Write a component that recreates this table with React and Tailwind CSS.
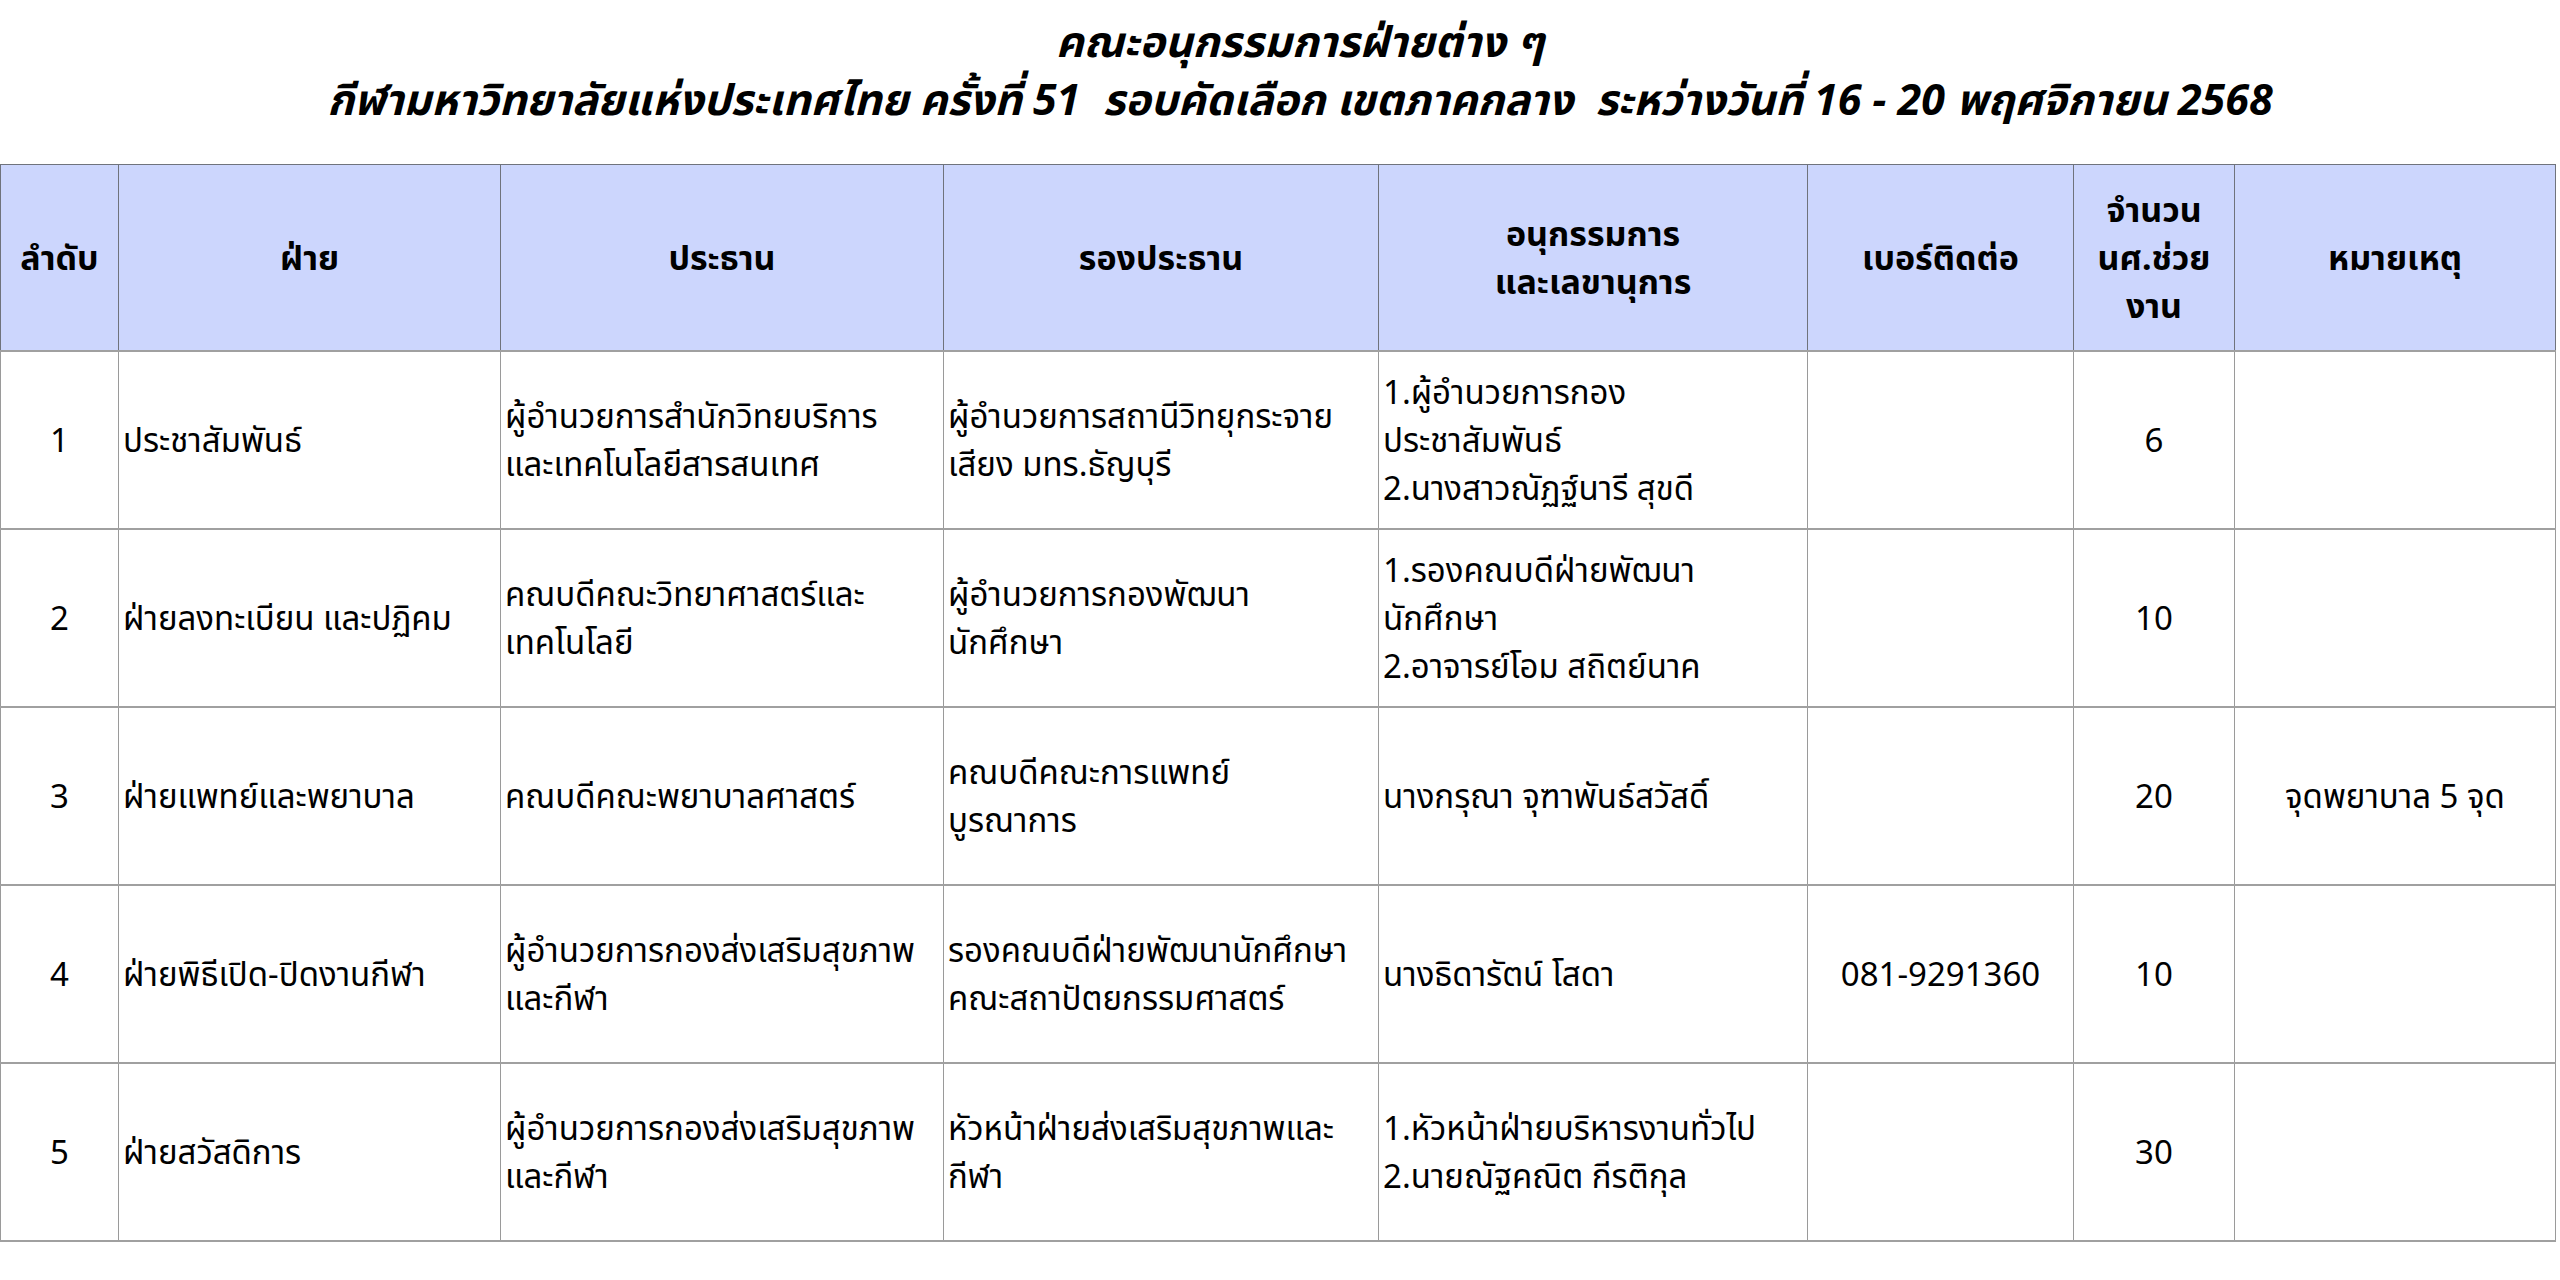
const columns = [
  { key: 'no', label: 'ลำดับ', width: 'w-[118px]' },
  { key: 'dept', label: 'ฝ่าย', width: 'w-[382px]' },
  { key: 'chair', label: 'ประธาน', width: 'w-[443px]' },
  { key: 'vice', label: 'รองประธาน', width: 'w-[435px]' },
  { key: 'members', label: ['อนุกรรมการ', 'และเลขานุการ'], width: 'w-[429px]' },
  { key: 'phone', label: 'เบอร์ติดต่อ', width: 'w-[266px]' },
  { key: 'students', label: ['จำนวน', 'นศ.ช่วย', 'งาน'], width: 'w-[161px]' },
  { key: 'note', label: 'หมายเหตุ', width: 'w-[321px]' },
]

const rows = [
  {
    no: '1',
    dept: ['ประชาสัมพันธ์'],
    chair: ['ผู้อำนวยการสำนักวิทยบริการ', 'และเทคโนโลยีสารสนเทศ'],
    vice: ['ผู้อำนวยการสถานีวิทยุกระจาย', 'เสียง มทร.ธัญบุรี'],
    members: ['1.ผู้อำนวยการกอง', 'ประชาสัมพันธ์', '2.นางสาวณัฏฐ์นารี สุขดี'],
    phone: '',
    students: '6',
    note: '',
  },
  {
    no: '2',
    dept: ['ฝ่ายลงทะเบียน และปฏิคม'],
    chair: ['คณบดีคณะวิทยาศาสตร์และ', 'เทคโนโลยี'],
    vice: ['ผู้อำนวยการกองพัฒนา', 'นักศึกษา'],
    members: ['1.รองคณบดีฝ่ายพัฒนา', 'นักศึกษา', '2.อาจารย์โอม สถิตย์นาค'],
    phone: '',
    students: '10',
    note: '',
  },
  {
    no: '3',
    dept: ['ฝ่ายแพทย์และพยาบาล'],
    chair: ['คณบดีคณะพยาบาลศาสตร์'],
    vice: ['คณบดีคณะการแพทย์', 'บูรณาการ'],
    members: ['นางกรุณา จุฑาพันธ์สวัสดิ์'],
    phone: '',
    students: '20',
    note: 'จุดพยาบาล 5 จุด',
  },
  {
    no: '4',
    dept: ['ฝ่ายพิธีเปิด-ปิดงานกีฬา'],
    chair: ['ผู้อำนวยการกองส่งเสริมสุขภาพ', 'และกีฬา'],
    vice: ['รองคณบดีฝ่ายพัฒนานักศึกษา', 'คณะสถาปัตยกรรมศาสตร์'],
    members: ['นางธิดารัตน์ โสดา'],
    phone: '081-9291360',
    students: '10',
    note: '',
  },
  {
    no: '5',
    dept: ['ฝ่ายสวัสดิการ'],
    chair: ['ผู้อำนวยการกองส่งเสริมสุขภาพ', 'และกีฬา'],
    vice: ['หัวหน้าฝ่ายส่งเสริมสุขภาพและ', 'กีฬา'],
    members: ['1.หัวหน้าฝ่ายบริหารงานทั่วไป', '2.นายณัฐคณิต กีรติกุล'],
    phone: '',
    students: '30',
    note: '',
  },
]

function Lines({ items }) {
  return items.map((line, i) => (
    <span key={i} className="block whitespace-nowrap">
      {line}
    </span>
  ))
}

const cell = 'border-x border-y-2 border-x-[#9a9a9a] border-y-[#a0a0a0] align-middle'

export default function App() {
  return (
    <div className="min-h-[1280px] w-[2560px] bg-white font-['Noto_Sans','Noto_Sans_Thai',sans-serif] text-black">
      <div className="flex h-[164px] flex-col items-center pt-[12px] pl-[40px] text-[43px] font-bold italic leading-[58px]">
        <p>คณะอนุกรรมการฝ่ายต่าง ๆ</p>
        <p className="whitespace-pre">กีฬามหาวิทยาลัยแห่งประเทศไทย ครั้งที่ 51  รอบคัดเลือก เขตภาคกลาง  ระหว่างวันที่ 16 - 20 พฤศจิกายน 2568</p>
      </div>

      <table className="w-[2555px] table-fixed border-collapse text-[33px] leading-[48px]">
        <thead>
          <tr className="h-[186px] bg-[#ccd6fd]">
            {columns.map((col) => (
              <th
                key={col.key}
                className={`${col.width} border border-[#6f737c] px-1 text-center align-middle text-[34px] font-bold`}
              >
                {Array.isArray(col.label) ? <Lines items={col.label} /> : col.label}
              </th>
            ))}
          </tr>
        </thead>
        <tbody>
          {rows.map((row) => (
            <tr key={row.no} className="h-[178px]">
              <td className={`${cell} text-center`}>{row.no}</td>
              <td className={`${cell} px-[4px]`}>
                <Lines items={row.dept} />
              </td>
              <td className={`${cell} px-[4px]`}>
                <Lines items={row.chair} />
              </td>
              <td className={`${cell} px-[4px]`}>
                <Lines items={row.vice} />
              </td>
              <td className={`${cell} px-[4px]`}>
                <Lines items={row.members} />
              </td>
              <td className={`${cell} text-center`}>{row.phone}</td>
              <td className={`${cell} text-center`}>{row.students}</td>
              <td className={`${cell} text-center`}>{row.note}</td>
            </tr>
          ))}
        </tbody>
      </table>
    </div>
  )
}
